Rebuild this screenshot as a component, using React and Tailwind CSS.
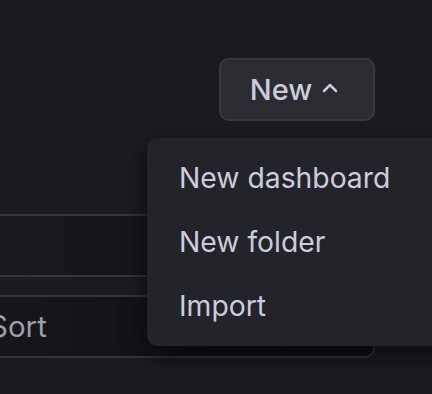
import React from "react";

export default function App() {
  return (
    <div
      className="relative w-[432px] h-[394px] overflow-hidden bg-[#1b1c20] flex flex-col"
      style={{ fontFamily: "Inter, 'Noto Sans', sans-serif" }}
    >
      <div className="flex justify-end pr-[57px] pt-[58px]">
        <button className="w-[156px] h-[63px] rounded-[10px] bg-[#2b2c31] border-2 border-[#393a3f] flex items-center justify-center gap-[10px] text-[#ccccdc] text-[29px] font-medium">
          <span className="-ml-[6px]">New</span>
          <svg width="16" height="10" viewBox="0 0 16 10" className="mt-[-4px]">
            <path d="M2 8 L8 2 L14 8" stroke="#ccccdc" strokeWidth="2.5" fill="none" strokeLinecap="round" strokeLinejoin="round" />
          </svg>
        </button>
      </div>
      <div className="mt-[93px] ml-[-20px] mr-[57px] h-[63px] border-2 border-[#35363b] rounded-[10px] bg-gradient-to-r from-[#18191d] to-[#101115]"></div>
      <div className="mt-[18px] ml-[-20px] mr-[57px] h-[63px] border-2 border-[#35363b] rounded-[10px] bg-gradient-to-r from-[#16171b] to-[#0f1014] flex items-center pl-[7px] text-[29.5px] text-[#9d9ea6]">
        <span>Sort</span>
      </div>
      <div className="absolute left-[147px] top-[138px] w-[320px] h-[208px] rounded-[10px] bg-[#232429] py-[8px] shadow-[0_8px_24px_rgba(1,4,9,0.75)] text-[#ccccdc] text-[28.3px]">
        <div className="h-[64px] flex items-center pl-[32px]">New dashboard</div>
        <div className="h-[64px] flex items-center pl-[32px]">New folder</div>
        <div className="h-[64px] flex items-center pl-[32px]">Import</div>
      </div>
    </div>
  );
}
